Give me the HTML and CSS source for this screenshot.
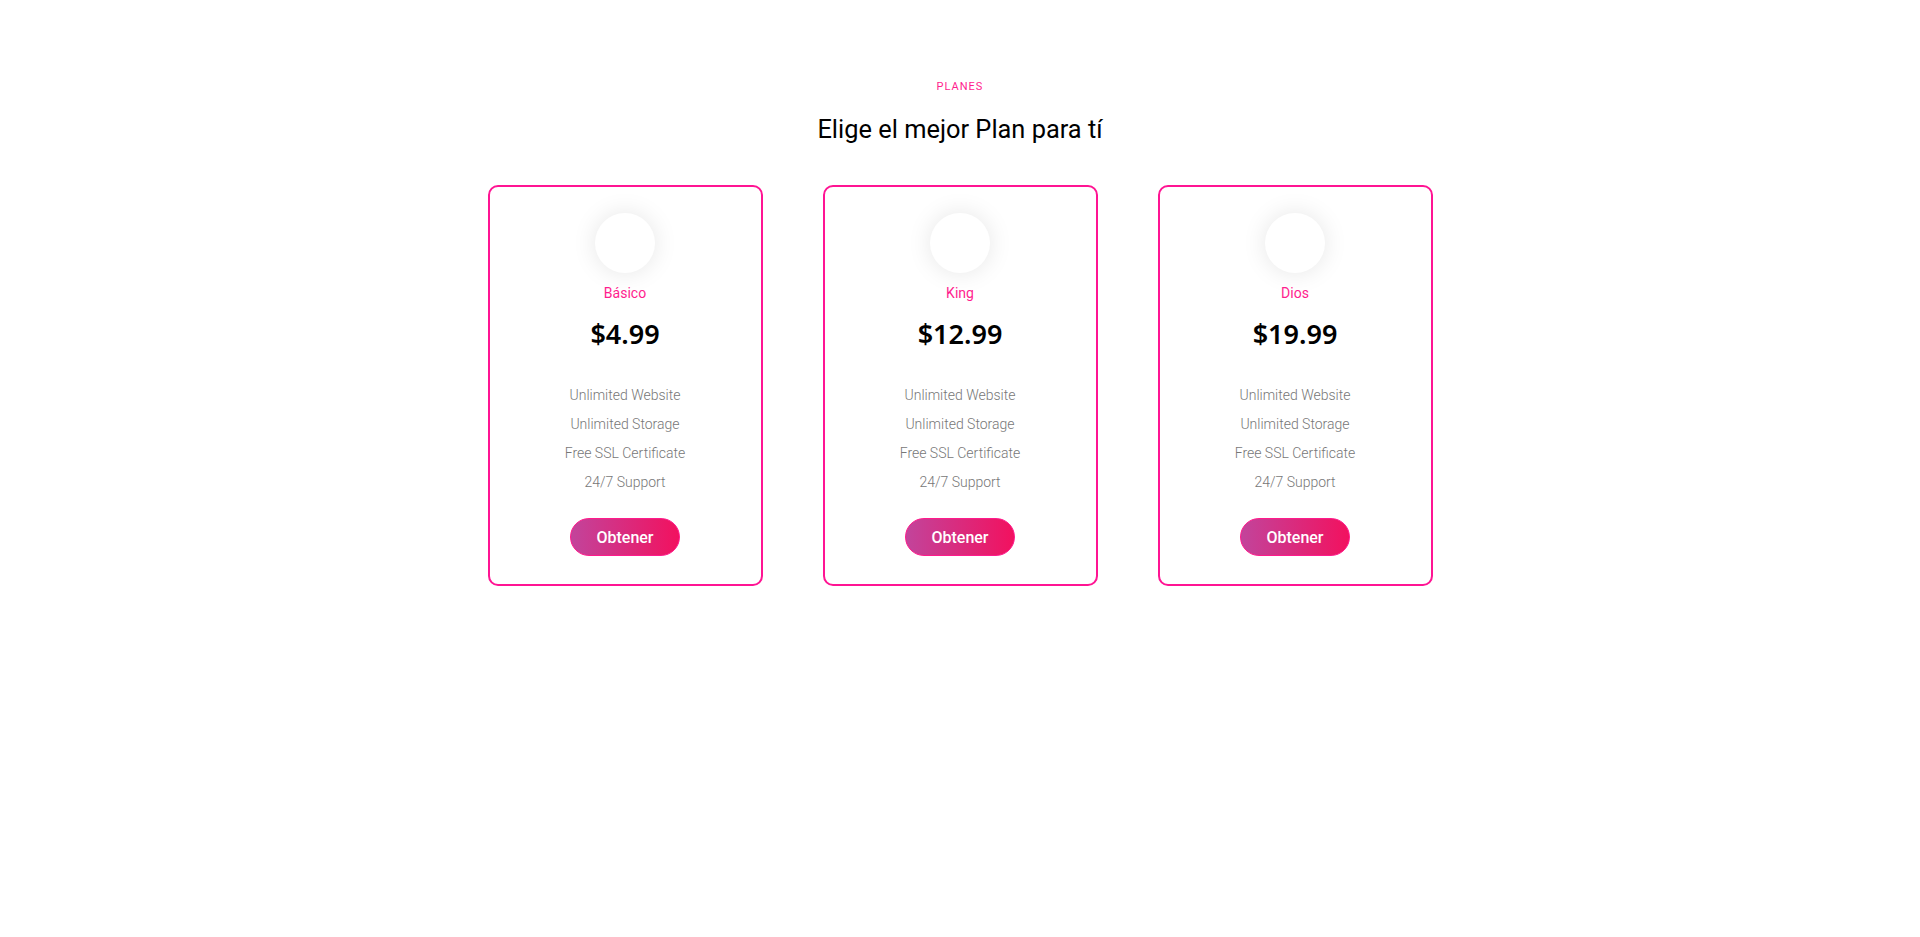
FILE: index.html
```html
<!DOCTYPE html>
<html lang="es">
<head>
<meta charset="utf-8">
<title>Planes</title>
<link rel="stylesheet" href="styles.css">
</head>
<body>
<section class="pricing">
  <p class="eyebrow">PLANES</p>
  <h2 class="title">Elige el mejor Plan para tí</h2>
  <div class="plans">
    <div class="card">
      <div class="avatar"></div>
      <p class="name">Básico</p>
      <p class="price">$4.99</p>
      <ul class="features">
        <li>Unlimited Website</li>
        <li>Unlimited Storage</li>
        <li>Free SSL Certificate</li>
        <li>24/7 Support</li>
      </ul>
      <button class="btn">Obtener</button>
    </div>
    <div class="card">
      <div class="avatar"></div>
      <p class="name">King</p>
      <p class="price">$12.99</p>
      <ul class="features">
        <li>Unlimited Website</li>
        <li>Unlimited Storage</li>
        <li>Free SSL Certificate</li>
        <li>24/7 Support</li>
      </ul>
      <button class="btn">Obtener</button>
    </div>
    <div class="card">
      <div class="avatar"></div>
      <p class="name">Dios</p>
      <p class="price">$19.99</p>
      <ul class="features">
        <li>Unlimited Website</li>
        <li>Unlimited Storage</li>
        <li>Free SSL Certificate</li>
        <li>24/7 Support</li>
      </ul>
      <button class="btn">Obtener</button>
    </div>
  </div>
</section>
</body>
</html>
```

FILE: styles.css
```css
* { box-sizing: border-box; }
html, body {
  margin: 0;
  padding: 0;
  background: #fff;
  font-family: Roboto, "Liberation Sans", sans-serif;
}
.pricing {
  padding-top: 79px;
  text-align: center;
}
.eyebrow {
  margin: 0;
  font-size: 11px;
  line-height: 16px;
  letter-spacing: 1px;
  color: #ff1d8e;
}
.title {
  margin: 18px 0 0;
  font-size: 25.4px;
  line-height: 32px;
  font-weight: 400;
  color: #000;
}
.plans {
  display: flex;
  justify-content: center;
  gap: 60px;
  margin-top: 40px;
}
.card {
  width: 275px;
  border: 2px solid #ff1493;
  border-radius: 10px;
  padding: 26px 0 28px;
  display: flex;
  flex-direction: column;
  align-items: center;
}
.avatar {
  width: 60px;
  height: 60px;
  border-radius: 50%;
  background: #fff;
  box-shadow: 0 0 24px rgba(0, 0, 0, 0.1);
}
.name {
  margin: 10px 0 0;
  font-size: 14px;
  line-height: 20px;
  color: #ff1d8e;
}
.price {
  margin: 14px 0 0;
  font-family: "Noto Sans", sans-serif;
  font-weight: 600;
  font-size: 27px;
  line-height: 34px;
  color: #000;
}
.features {
  list-style: none;
  margin: 30px 0 0;
  padding: 0;
}
.features li {
  font-size: 14px;
  line-height: 29px;
  font-weight: 300;
  color: #777;
}
.btn {
  margin-top: 21px;
  width: 110px;
  height: 38px;
  border: 1px solid #ff1a8c;
  border-radius: 20px;
  background: linear-gradient(to right, #c2449b, #f2115f);
  color: #fff;
  font-family: Roboto, sans-serif;
  font-weight: 500;
  font-size: 16px;
  padding: 0;
}
```
